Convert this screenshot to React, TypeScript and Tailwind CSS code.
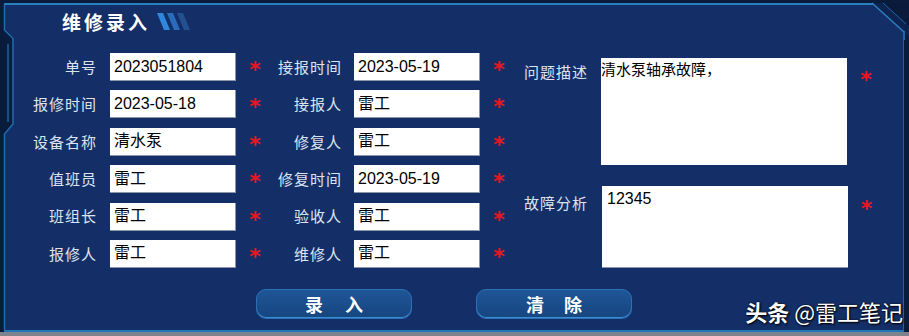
import React from "react";

const sans = { fontFamily: '"Noto Sans CJK SC", sans-serif' };
const inputFont = { fontFamily: '"Liberation Sans", "Noto Sans CJK SC", sans-serif' };

function Star() {
  return (
    <div className="w-[38px] flex items-center justify-center text-[#e8161e] text-[22px] leading-none font-bold" style={{ fontFamily: '"DejaVu Sans", sans-serif' }}>
      <span className="translate-y-[3px]">*</span>
    </div>
  );
}

function Field({ v }: { v: string }) {
  return (
    <div
      className="w-[126px] h-[28px] bg-white border-b border-r border-[#8d97ab] flex items-center pl-[4px] text-[16px] text-black"
      style={inputFont}
    >
      {v}
    </div>
  );
}

function Row({ label, value, lw, gap }: { label: string; value: string; lw: string; gap: string }) {
  return (
    <div className="flex items-center h-[28px]">
      <div className={`${lw} text-right text-[15px] tracking-[1px] text-[#dde4ef]`} style={sans}>
        {label}
      </div>
      <div className={gap}>
        <Field v={value} />
      </div>
      <Star />
    </div>
  );
}

export default function App() {
  const col1 = [
    ["单号", "2023051804"],
    ["报修时间", "2023-05-18"],
    ["设备名称", "清水泵"],
    ["值班员", "雷工"],
    ["班组长", "雷工"],
    ["报修人", "雷工"],
  ];
  const col2 = [
    ["接报时间", "2023-05-19"],
    ["接报人", "雷工"],
    ["修复人", "雷工"],
    ["修复时间", "2023-05-19"],
    ["验收人", "雷工"],
    ["维修人", "雷工"],
  ];
  return (
    <div className="w-[909px] h-[336px] relative overflow-hidden bg-[#0a1c3c] flex flex-col">
      <div className="ml-[4px] mr-[5px] mt-[3px] h-[329px] bg-[#142f68] border-t-2 border-t-[#2a7fc0] border-l border-r border-b-2 border-l-[#1d64a6] border-r-[#1d64a6] border-b-[#2178b8] flex flex-col">
        {/* title */}
        <div className="h-[34px] flex items-center pl-[57px]">
          <span className="text-white text-[19px] font-bold tracking-[3px]" style={sans}>
            维修录入
          </span>
          <svg width="40" height="18" viewBox="0 0 40 18" className="ml-[7px]">
            <polygon points="0,0 6,0 13,17 7,17" fill="#2f88dc" />
            <polygon points="10,0 16,0 23,17 17,17" fill="#2a6cbc" />
            <polygon points="20,0 26,0 33,17 27,17" fill="#24508f" />
          </svg>
        </div>
        {/* form */}
        <div className="mt-[14px] flex pl-[10px]">
          <div className="flex flex-col gap-y-[9.4px]">
            {col1.map(([l, v]) => (
              <Row key={l} label={l} value={v} lw="w-[82px]" gap="ml-[13px]" />
            ))}
          </div>
          <div className="flex flex-col gap-y-[9.4px]">
            {col2.map(([l, v]) => (
              <Row key={l} label={l} value={v} lw="w-[68px]" gap="ml-[12px]" />
            ))}
          </div>
          <div className="flex flex-col pt-[5px]">
            <div className="flex items-start">
              <div className="w-[83px] pl-[6px] pt-[3px] text-[15px] tracking-[1px] text-[#dde4ef]" style={sans}>
                问题描述
              </div>
              <div
                className="w-[246px] h-[107px] bg-white text-[15px] leading-[20px] text-black pt-[1px]"
                style={sans}
              >
                清水泵轴承故障，
              </div>
              <div className="w-[38px] flex justify-center pt-[11px] text-[#e8161e] text-[22px] leading-none font-bold" style={{ fontFamily: '"DejaVu Sans", sans-serif' }}>
                *
              </div>
            </div>
            <div className="flex items-start mt-[21px]">
              <div className="w-[84px] pl-[6px] pt-[6px] text-[15px] tracking-[1px] text-[#dde4ef]" style={sans}>
                故障分析
              </div>
              <div
                className="w-[246px] h-[82px] bg-white border-b border-[#8d97ab] text-[16px] leading-[20px] text-black pl-[5px] pt-[3px]"
                style={inputFont}
              >
                12345
              </div>
              <div className="w-[37px] flex justify-center pt-[12px] text-[#e8161e] text-[22px] leading-none font-bold" style={{ fontFamily: '"DejaVu Sans", sans-serif' }}>
                *
              </div>
            </div>
          </div>
        </div>
        {/* buttons */}
        <div className="mt-[21px] flex pl-[251px] gap-[64px]">
          <button className="w-[156px] h-[30px] rounded-[10px] border border-[#2b70b6] bg-gradient-to-b from-[#1e5698] to-[#17457f] shadow-[inset_0_-1px_0_#3a8fd4] flex items-center justify-center gap-[22px] text-white text-[18px] font-bold" style={sans}>
            <span>录</span>
            <span>入</span>
          </button>
          <button className="w-[156px] h-[30px] rounded-[10px] border border-[#2b70b6] bg-gradient-to-b from-[#1e5698] to-[#17457f] shadow-[inset_0_-1px_0_#3a8fd4] flex items-center justify-center gap-[20px] text-white text-[18px] font-bold" style={sans}>
            <span>清</span>
            <span>除</span>
          </button>
        </div>
      </div>
      <div className="mt-auto h-[4px] bg-[#7e838d]" />

      {/* left bracket decoration */}
      <svg className="absolute left-0 top-0" width="20" height="336" viewBox="0 0 20 336">
        <polygon points="0,28 4,28 13,38 13,124 4,136 0,136" fill="#0a1c3c" />
        <polyline points="4.5,4 4.5,30 13,38.5 13,124 4.5,134 4.5,330" fill="none" stroke="#1f6cb0" strokeWidth="1.5" />
        <rect x="7" y="44" width="2" height="78" fill="#1a4c86" />
      </svg>
      {/* top-right corner decoration */}
      <svg className="absolute right-0 top-0" width="40" height="40" viewBox="869 0 40 40">
        <polygon points="872,3 909,3 909,38 904,32" fill="#0e2450" />
        <polygon points="884,3 909,3 909,26" fill="#0a1a3a" />
        <line x1="872" y1="3" x2="904" y2="32" stroke="#2a80c2" strokeWidth="1.5" />
        <line x1="883" y1="3" x2="906" y2="24" stroke="#1f5f9c" strokeWidth="1" />
        <line x1="904.5" y1="31" x2="904.5" y2="40" stroke="#1d64a6" strokeWidth="1" />
      </svg>

      {/* watermark */}
      <div
        className="absolute right-[6px] top-[296px] text-white text-[22px] leading-[30px] [text-shadow:1px_1px_2px_#000,0_0_2px_#000]"
        style={sans}
      >
        <span className="font-bold">头条</span>
        <span> @雷工笔记</span>
      </div>
    </div>
  );
}
